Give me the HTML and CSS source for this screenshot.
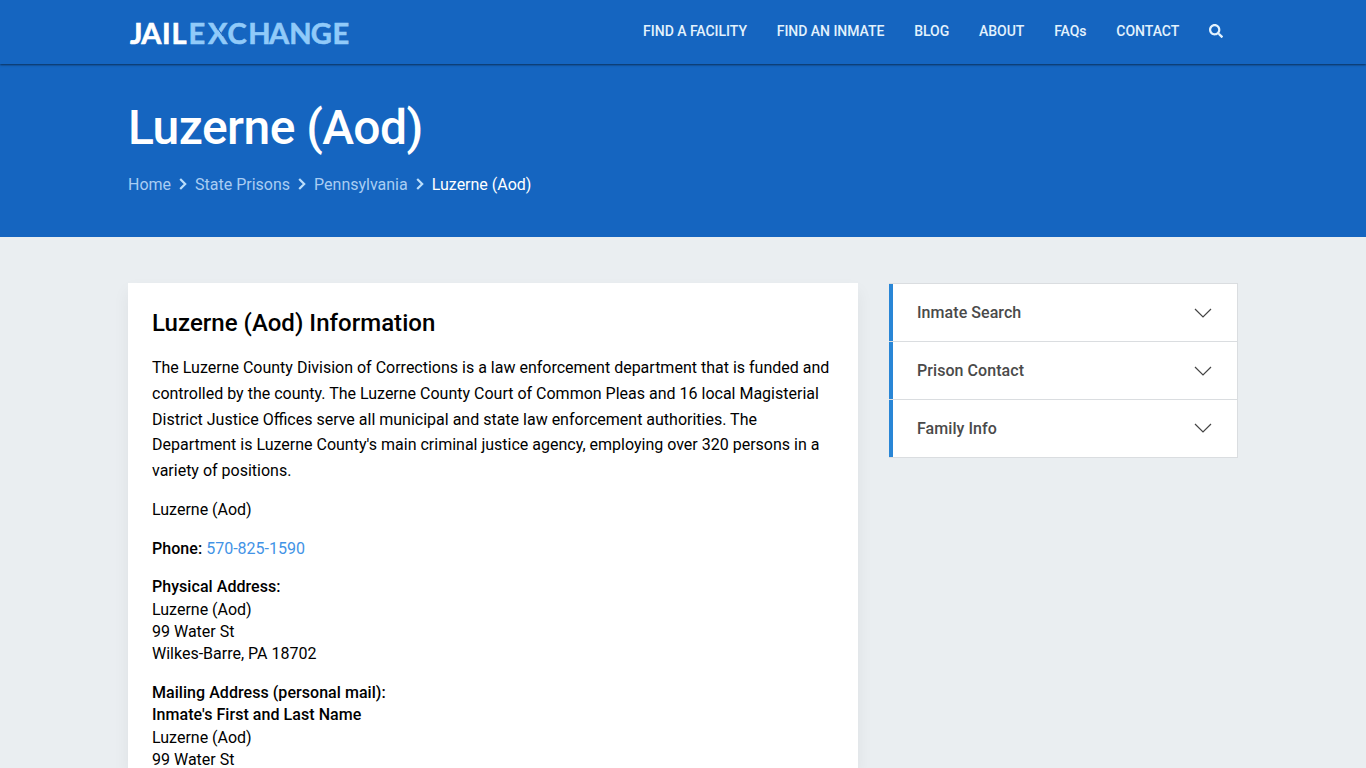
FILE: index.html
```html
<!DOCTYPE html>
<html lang="en">
<head>
<meta charset="utf-8">
<title>Luzerne (Aod)</title>
<link rel="stylesheet" href="styles.css">
</head>
<body>
<header class="navbar">
  <div class="container navbar-inner">
    <a class="logo" aria-label="Jail Exchange">
      <svg width="224" height="40" viewBox="0 0 224 40">
        <text class="logo-jail" x="2 13.2 34 43.5" y="32">JAIL</text>
        <text class="logo-exchange" x="60.5 80 99.5 120.3 141 161.3 182.8 204.5" y="32">EXCHANGE</text>
        <path class="logo-cut" d="M88.500 15L95 24"/>
      </svg>
    </a>
    <nav class="menu">
      <a>FIND A FACILITY</a>
      <a>FIND AN INMATE</a>
      <a>BLOG</a>
      <a>ABOUT</a>
      <a>FAQs</a>
      <a>CONTACT</a>
      <svg class="search" viewBox="0 0 512 512"><path d="M505 442.7L405.3 343c-4.500-4.500-10.600-7-17-7H372c27.600-35.300 44-79.700 44-128C416 93.100 322.900 0 208 0S0 93.100 0 208s93.100 208 208 208c48.300 0 92.700-16.400 128-44v16.300c0 6.400 2.500 12.500 7 17l99.700 99.700c9.400 9.400 24.600 9.400 33.900 0l28.300-28.300c9.400-9.400 9.400-24.600.1-34zM208 336c-70.700 0-128-57.200-128-128 0-70.700 57.200-128 128-128 70.700 0 128 57.200 128 128 0 70.700-57.200 128-128 128z"/></svg>
    </nav>
  </div>
</header>
<section class="hero">
  <div class="container">
    <h1>Luzerne (Aod)</h1>
    <div class="breadcrumb">
      <a>Home</a>
      <svg class="sep" viewBox="0 0 8 12"><path d="M1.200 1L6.200 6L1.200 11"/></svg>
      <a>State Prisons</a>
      <svg class="sep" viewBox="0 0 8 12"><path d="M1.200 1L6.200 6L1.200 11"/></svg>
      <a>Pennsylvania</a>
      <svg class="sep" viewBox="0 0 8 12"><path d="M1.200 1L6.200 6L1.200 11"/></svg>
      <span class="current">Luzerne (Aod)</span>
    </div>
  </div>
</section>
<main class="container content">
  <article class="card">
    <h2>Luzerne (Aod) Information</h2>
    <p class="intro">The Luzerne County Division of Corrections is a law enforcement department that is funded and<br>controlled by the county. The Luzerne County Court of Common Pleas and 16 local Magisterial<br>District Justice Offices serve all municipal and state law enforcement authorities. The<br>Department is Luzerne County's main criminal justice agency, employing over 320 persons in a<br>variety of positions.</p>
    <p class="intro">Luzerne (Aod)</p>
    <p class="intro phone-line"><strong>Phone:</strong> <a class="phone">570-825-1590</a></p>
    <p class="address"><strong>Physical Address:</strong><br>Luzerne (Aod)<br>99 Water St<br>Wilkes-Barre, PA 18702</p>
    <p class="address"><strong>Mailing Address (personal mail):</strong><br><strong>Inmate's First and Last Name</strong><br>Luzerne (Aod)<br>99 Water St</p>
  </article>
  <aside class="accordion">
    <div class="item"><span>Inmate Search</span><svg class="chevron" viewBox="0 0 18 10"><path d="M1 1L9 9L17 1"/></svg></div>
    <div class="item"><span>Prison Contact</span><svg class="chevron" viewBox="0 0 18 10"><path d="M1 1L9 9L17 1"/></svg></div>
    <div class="item"><span>Family Info</span><svg class="chevron" viewBox="0 0 18 10"><path d="M1 1L9 9L17 1"/></svg></div>
  </aside>
</main>
</body>
</html>
```
FILE: styles.css
```css
* { box-sizing: border-box; }
html, body { height: 100%; }
body {
  margin: 0;
  overflow: hidden;
  background: #eaeef1;
  color: #000;
  font-family: Roboto, sans-serif;
  font-size: 16px;
}
.container { width: 1110px; margin: 0 auto; }
.navbar {
  position: relative;
  height: 64px;
  background: #1565c0;
  box-shadow: 0 1px 2px rgba(0, 0, 0, .55);
}
.navbar-inner { display: flex; justify-content: space-between; height: 64px; }
.logo { padding-top: 12px; }
.logo svg { display: block; }
.logo text { font-family: Lato, "Open Sans", sans-serif; font-size: 29px; font-weight: 700; stroke-width: .6; }
.logo-jail { fill: #fff; stroke: #fff; }
.logo-exchange { fill: #90caf9; stroke: #90caf9; }
.logo-cut { fill: none; stroke: #1565c0; stroke-width: 1; }
.menu {
  display: flex;
  align-items: center;
  gap: 29.8px;
  height: 62px;
  padding-right: 15px;
  color: #e3f2fd;
  font-size: 14px;
  font-weight: 500;
  letter-spacing: -.03px;
}
.search { width: 14px; height: 14px; fill: #e3f2fd; }
.hero { height: 173px; padding-top: 35px; background: #1565c0; color: #fff; }
.hero h1 { margin: 0; font-size: 48px; line-height: 58px; font-weight: 500; letter-spacing: -.55px; }
.breadcrumb { display: flex; align-items: center; gap: 8px; height: 24px; margin-top: 15px; color: #a9cdf3; }
.sep { width: 8px; height: 12px; fill: none; stroke: #bbdefb; stroke-width: 2.2; }
.current { color: #fff; }
.content { display: flex; align-items: flex-start; gap: 31px; padding-top: 46px; }
.card {
  width: 730px;
  height: 485px;
  padding: 25px 24px 0;
  background: #fff;
  box-shadow: 0 8px 16px rgba(0, 0, 0, .06);
}
.card h2 { margin: 0 0 17px; font-size: 24px; line-height: 30px; font-weight: 500; letter-spacing: .03px; }
.card p { margin: 0 0 13px; white-space: nowrap; }
.card .intro { line-height: 25.75px; }
.card .phone-line { margin-bottom: 15px; }
.card .address { line-height: 22.4px; margin-bottom: 16px; }
.card .address:last-child { margin-bottom: 0; }
.card strong { font-weight: 500; letter-spacing: .05px; }
.phone { color: #4293e6; }
.accordion { width: 349px; border: solid #dadde0; border-width: 1px 1px 0 0; }
.item {
  display: flex;
  align-items: center;
  justify-content: space-between;
  height: 58px;
  padding: 0 25px 0 28px;
  background: linear-gradient(to right, #2986d6 4px, #fff 4px);
  background-size: 100% 57px;
  background-repeat: no-repeat;
  border-bottom: 1px solid #dadde0;
  color: #4a4a4a;
  font-weight: 500;
  letter-spacing: .06px;
}
.chevron { width: 18px; height: 10px; fill: none; stroke: #444; stroke-width: 1.2; }
.item:last-child .chevron { margin-bottom: 2px; }
```
